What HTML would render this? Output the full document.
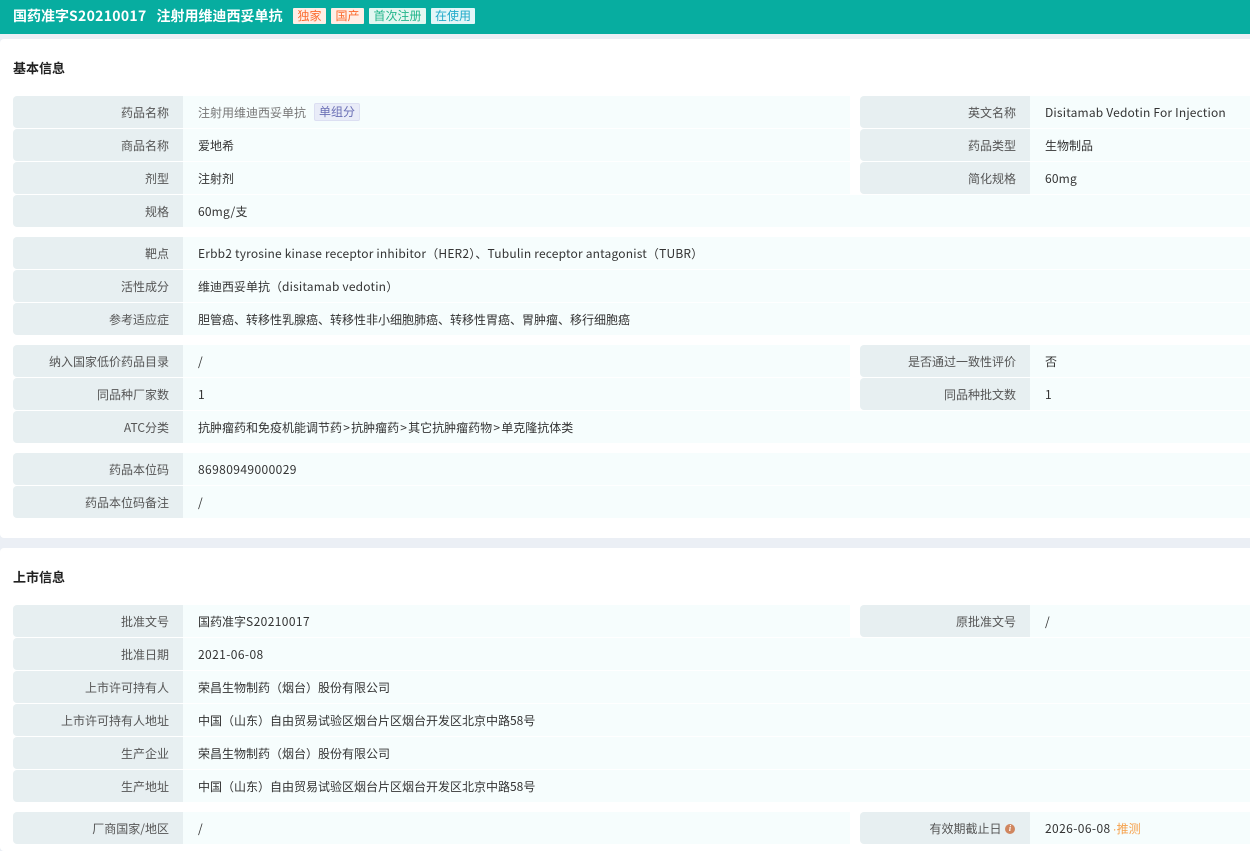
<!DOCTYPE html>
<html lang="zh"><head><meta charset="utf-8"><title>注射用维迪西妥单抗</title>
<style>
html,body{margin:0;padding:0;width:1250px;height:851px;overflow:hidden;background:#ebeff5}
body{position:relative;font:12px/34px "Noto Sans CJK SC","Liberation Sans",sans-serif;color:#333}
.hd{position:absolute;left:0;top:0;width:1250px;height:34px;background:#07ada0}
.t{position:absolute;top:7px;height:18px;line-height:18px;font-size:14px;font-weight:700;color:#fff;white-space:nowrap}
.tag{position:absolute;top:8px;height:16px;line-height:16px;text-align:center;font-size:12px;border-radius:1px}
.card{position:absolute;left:0;width:1250px;background:#fff;border-radius:4px 0 0 4px}
.h{position:absolute;left:13px;height:18px;line-height:18px;font-size:13px;font-weight:700;color:#222}
.l,.v{position:absolute;height:32px;white-space:nowrap;box-sizing:border-box}
.l{background:#e7eff1;color:#555;text-align:right;padding-right:14px;width:170px;border-radius:4px 0 0 4px}
.v{background:#f6fdfd;color:#333;padding-left:15px}
.a{left:13px}.b{left:183px;width:1067px}.s{width:667px}.c{left:860px}.d{left:1030px;width:220px}
.m{letter-spacing:.18px}
.n{letter-spacing:.4px}
.g{padding:0 1.2px}
.chip{display:inline-block;height:16px;line-height:16px;padding:0 4px;margin-left:8px;background:#e9ecf8;border:1px solid #dcdff2;border-radius:2px;color:#6a6fb5;vertical-align:1px}
.i{position:absolute;left:145px;top:12px;width:10px;height:10px;border-radius:50%;background:#d0865f;color:#fff;font:italic 700 8px/10px "Liberation Serif",serif;text-align:center}
</style></head><body>
<div class="hd"></div>
<div class="t" style="left:13px">国药准字<span style="letter-spacing:.3px">S20210017</span></div>
<div class="t" style="left:156.5px">注射用维迪西妥单抗</div>
<div class="tag" style="left:293px;width:33px;background:#ffeee6;color:#fb6a2c">独家</div>
<div class="tag" style="left:331px;width:33px;background:#ffeee6;color:#fb6a2c">国产</div>
<div class="tag" style="left:369px;width:57px;background:#e3f7f1;color:#22b58a">首次注册</div>
<div class="tag" style="left:431px;width:44px;background:#e3f6f8;color:#1fa9c9">在使用</div>

<div class="card" style="top:39px;height:499px">
<div class="h" style="top:20px">基本信息</div>
</div>
<div class="card" style="top:548px;height:303px">
<div class="h" style="top:20px">上市信息</div>
</div>

<div class="l a" style="top:96px">药品名称</div><div class="v s" style="left:183px;top:96px;color:#777">注射用维迪西妥单抗<span class="chip">单组分</span></div>
<div class="l c" style="top:96px">英文名称</div><div class="v d m" style="top:96px">Disitamab Vedotin For Injection</div>
<div class="l a" style="top:129px">商品名称</div><div class="v s" style="left:183px;top:129px">爱地希</div>
<div class="l c" style="top:129px">药品类型</div><div class="v d" style="top:129px">生物制品</div>
<div class="l a" style="top:162px">剂型</div><div class="v s" style="left:183px;top:162px">注射剂</div>
<div class="l c" style="top:162px">简化规格</div><div class="v d m" style="top:162px">60mg</div>
<div class="l a" style="top:195px">规格</div><div class="v b m" style="top:195px">60mg/支</div>

<div class="l a" style="top:237px">靶点</div><div class="v b m" style="top:237px">Erbb2 tyrosine kinase receptor inhibitor（HER2）、Tubulin receptor antagonist（TUBR）</div>
<div class="l a" style="top:270px">活性成分</div><div class="v b" style="top:270px">维迪西妥单抗（<span class="m">disitamab vedotin</span>）</div>
<div class="l a" style="top:303px">参考适应症</div><div class="v b" style="top:303px">胆管癌、转移性乳腺癌、转移性非小细胞肺癌、转移性胃癌、胃肿瘤、移行细胞癌</div>

<div class="l a" style="top:345px">纳入国家低价药品目录</div><div class="v s" style="left:183px;top:345px">/</div>
<div class="l c" style="top:345px">是否通过一致性评价</div><div class="v d" style="top:345px">否</div>
<div class="l a" style="top:378px">同品种厂家数</div><div class="v s" style="left:183px;top:378px">1</div>
<div class="l c" style="top:378px">同品种批文数</div><div class="v d" style="top:378px">1</div>
<div class="l a" style="top:411px">ATC分类</div><div class="v b" style="top:411px">抗肿瘤药和免疫机能调节药<span class="g">&gt;</span>抗肿瘤药<span class="g">&gt;</span>其它抗肿瘤药物<span class="g">&gt;</span>单克隆抗体类</div>

<div class="l a" style="top:453px">药品本位码</div><div class="v b n" style="top:453px">86980949000029</div>
<div class="l a" style="top:486px">药品本位码备注</div><div class="v b" style="top:486px">/</div>

<div class="l a" style="top:605px">批准文号</div><div class="v s" style="left:183px;top:605px">国药准字<span class="n">S20210017</span></div>
<div class="l c" style="top:605px">原批准文号</div><div class="v d" style="top:605px">/</div>
<div class="l a" style="top:638px">批准日期</div><div class="v b n" style="top:638px">2021-06-08</div>
<div class="l a" style="top:671px">上市许可持有人</div><div class="v b" style="top:671px">荣昌生物制药（烟台）股份有限公司</div>
<div class="l a" style="top:704px">上市许可持有人地址</div><div class="v b" style="top:704px">中国（山东）自由贸易试验区烟台片区烟台开发区北京中路58号</div>
<div class="l a" style="top:737px">生产企业</div><div class="v b" style="top:737px">荣昌生物制药（烟台）股份有限公司</div>
<div class="l a" style="top:770px">生产地址</div><div class="v b" style="top:770px">中国（山东）自由贸易试验区烟台片区烟台开发区北京中路58号</div>

<div class="l a" style="top:812px">厂商国家/地区</div><div class="v s" style="left:183px;top:812px">/</div>
<div class="l c" style="top:812px;padding-right:28.5px">有效期截止日<span class="i">i</span></div><div class="v d" style="top:812px"><span class="n">2026-06-08</span><span style="color:#f5a04a;margin-left:2px"><span style="font-family:'Liberation Sans',sans-serif">·</span>推测</span></div>
</body></html>
